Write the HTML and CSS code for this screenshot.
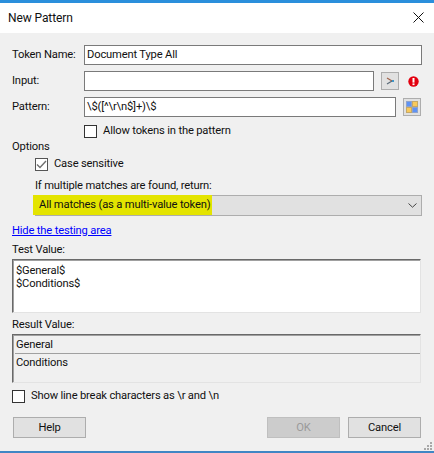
FILE: index.html
```html
<!DOCTYPE html>
<html lang="en">
<head>
<meta charset="utf-8">
<title>New Pattern</title>
<link rel="stylesheet" href="styles.css">
</head>
<body>
<div class="dialog">
  <header class="titlebar">
    <span class="title">New Pattern</span>
    <svg class="close" width="11" height="11" viewBox="0 0 11 11"><path d="M0.5 0.5L10.5 10.5M10.5 0.5L0.5 10.5" stroke="#111" stroke-width="1" fill="none"/></svg>
  </header>
  <main class="content">
    <div class="form-row">
      <label class="label">Token Name:</label>
      <div class="input grow">Document Type All</div>
    </div>
    <div class="form-row row-next">
      <label class="label">Input:</label>
      <div class="input input-short"></div>
      <button class="icon-btn btn-go"><svg width="10" height="8" viewBox="0 0 10 8"><path d="M2 1L7 4" stroke="#a0624a" stroke-width="1.2" fill="none"/><path d="M7 4L2 7" stroke="#5a6a78" stroke-width="1.2" fill="none"/><path d="M7 3h2v2H7z" fill="#3f97c9"/></svg></button>
      <svg class="err" width="11" height="11" viewBox="0 0 11 11"><circle cx="5.5" cy="5.5" r="5.2" fill="#e3000f"/><rect x="4.5" y="2" width="2" height="4.6" fill="#fff"/><rect x="4.5" y="7.4" width="2" height="1.7" fill="#fff"/></svg>
    </div>
    <div class="form-row row-next">
      <label class="label">Pattern:</label>
      <div class="input input-mid">\$([^\r\n$]+)\$</div>
      <button class="icon-btn btn-grid"><svg width="12" height="12" viewBox="0 0 12 12"><rect x="0.5" y="0.5" width="5" height="5" fill="#5f93f5" stroke="#8fa3cc"/><rect x="6.5" y="0.5" width="5" height="5" fill="#f8c95c" stroke="#c4a868"/><rect x="0.5" y="6.5" width="5" height="5" fill="#f8c95c" stroke="#c4a868"/><rect x="6.5" y="6.5" width="5" height="5" fill="#5f93f5" stroke="#8fa3cc"/></svg></button>
    </div>
    <div class="check-row allow">
      <span class="box"></span><span>Allow tokens in the pattern</span>
    </div>
    <div class="options-label">Options</div>
    <div class="options">
      <div class="check-row">
        <span class="box box-soft"><svg width="11" height="9" viewBox="0 0 11 9"><path d="M1 4.5L4 7.5L10 1" stroke="#6f6f6f" stroke-width="1.4" fill="none"/></svg></span><span>Case sensitive</span>
      </div>
      <div class="return-label">If multiple matches are found, return:</div>
      <div class="select">
        <span class="highlight">All matches (as a multi-value token)</span>
        <svg class="chevron" width="9" height="5" viewBox="0 0 9 5"><path d="M0.5 0.5L4.5 4.2L8.5 0.5" stroke="#444" stroke-width="1" fill="none"/></svg>
      </div>
    </div>
    <a class="link" href="#">Hide the testing area</a>
    <div class="section-label test-label">Test Value:</div>
    <div class="sunken test-value">$General$<br>$Conditions$</div>
    <div class="section-label result-label">Result Value:</div>
    <div class="sunken result-value">
      <div class="result-item">General</div>
      <div class="result-item last">Conditions</div>
    </div>
    <div class="check-row linebreak">
      <span class="box"></span><span>Show line break characters as \r and \n</span>
    </div>
    <footer class="buttons">
      <button class="btn">Help</button>
      <span class="spacer"></span>
      <button class="btn btn-disabled">OK</button>
      <button class="btn">Cancel</button>
    </footer>
  </main>
  <svg class="grip" width="9" height="9" viewBox="0 0 9 9" fill="#a8a8a8"><rect x="6" y="0" width="2" height="2"/><rect x="3" y="3" width="2" height="2"/><rect x="6" y="3" width="2" height="2"/><rect x="0" y="6" width="2" height="2"/><rect x="3" y="6" width="2" height="2"/><rect x="6" y="6" width="2" height="2"/></svg>
</div>
</body>
</html>
```

FILE: styles.css
```css
* { box-sizing: border-box; }
html, body { margin: 0; padding: 0; background: #fff; }
body { width: 434px; height: 453px; overflow: hidden; font: 11.2px/16px Roboto, "Liberation Sans", sans-serif; letter-spacing: -0.17px; color: #111; }
.dialog { position: relative; width: 434px; height: 453px; border-top: 3px solid #2a8fdc; border-bottom: 2px solid #3f86c4; background: #f0f0f0; display: flex; flex-direction: column; }
.titlebar { height: 30px; background: #fff; display: flex; align-items: center; justify-content: space-between; padding: 0 10px 0 8px; flex: none; }
.title { font-size: 12px; letter-spacing: -0.1px; }
.close { margin-bottom: 2px; }
.content { flex: 1; padding: 12px 12px 0 12px; display: flex; flex-direction: column; }
.form-row { display: flex; align-items: center; height: 20px; }
.row-next { margin-top: 6px; }
.label { width: 72px; flex: none; }
.input { height: 20px; border: 1px solid #7a7a7a; background: #fff; padding: 0 2px; line-height: 18px; }
.grow { width: 338px; }
.input-short { width: 290px; }
.input-mid { width: 312px; }
.icon-btn { width: 18px; height: 18px; padding: 0; margin-left: 7px; border: 1px solid #adadad; background: #e1e1e1; display: flex; align-items: center; justify-content: center; }
.err { margin-left: 9px; }
.check-row { display: flex; align-items: center; gap: 6px; height: 14px; }
.box { width: 13px; height: 13px; flex: none; border: 1px solid #333; background: #fff; display: flex; align-items: center; justify-content: center; }
.box-soft { border-color: #555; }
.allow { margin-top: 7px; margin-left: 72px; }
.options-label { margin-top: 1px; height: 16px; }
.options { padding-left: 23px; }
.options .check-row { margin-top: 2px; }
.return-label { margin-top: 7px; height: 16px; }
.select { margin-top: 1px; height: 21px; width: 387px; border: 1px solid #adadad; background: #e1e1e1; display: flex; align-items: center; justify-content: space-between; padding-right: 4px; }
.highlight { margin: -1px 0 0 -3px; height: 20px; align-self: flex-start; width: 179px; padding-left: 6px; background: #e4e400; line-height: 20px; white-space: nowrap; }
.link { margin-top: 7px; height: 16px; color: #0000ff; text-decoration: underline; align-self: flex-start; }
.section-label { height: 16px; }
.test-label { margin-top: 3px; }
.sunken { width: 409px; border: 1px solid #e3e3e3; border-top: 1px solid #696969; border-left: 1px solid #696969; box-shadow: inset 1px 1px 0 #a0a0a0; }
.test-value { margin-top: 1px; height: 54px; background: #fff; padding: 4px 3px; line-height: 13px; }
.result-label { margin-top: 4px; }
.result-value { margin-top: 1px; height: 49px; background: #f0f0f0; padding: 1px 0 0 2px; }
.result-item { height: 18px; line-height: 17px; padding-left: 1px; border-bottom: 1px solid #a0a0a0; }
.result-item.last { border-bottom: 0; }
.linebreak { margin-top: 6px; }
.buttons { display: flex; gap: 8px; margin-top: 14px; padding: 0 1px; width: 410px; }
.spacer { flex: 1; }
.btn { width: 73px; height: 21px; padding: 0; border: 1px solid #adadad; background: #e1e1e1; font: inherit; letter-spacing: inherit; color: #111; }
.btn-disabled { background: #cccccc; border-color: #bfbfbf; color: #9a9a9a; }
.grip { position: absolute; right: 1px; bottom: 0; }
```
